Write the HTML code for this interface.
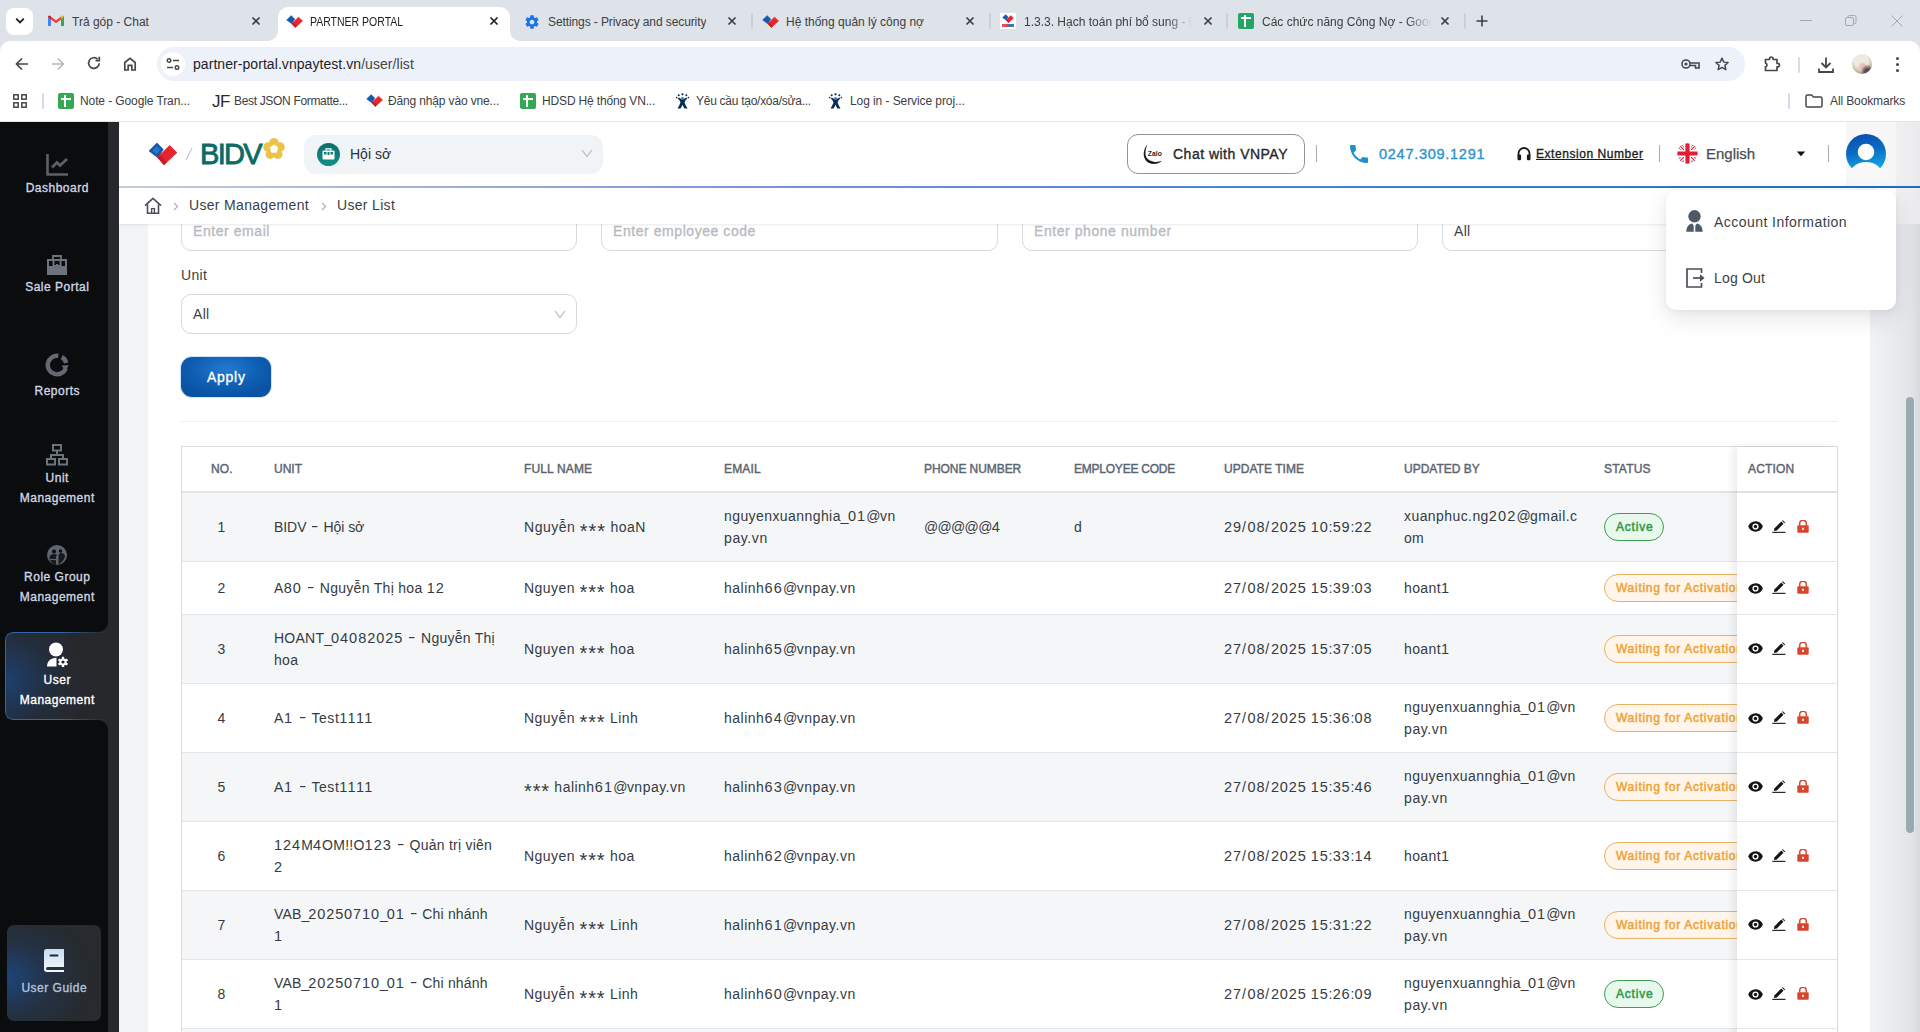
<!DOCTYPE html>
<html lang="en">
<head>
<meta charset="utf-8">
<title>PARTNER PORTAL</title>
<style>
*{box-sizing:border-box;margin:0;padding:0}
html,body{width:1920px;height:1032px;overflow:hidden;background:#fff;font-family:"Liberation Sans",sans-serif;}
body{position:relative}
.abs{position:absolute}
.sb{font-weight:normal!important;-webkit-text-stroke:.35px}
.th.sb{-webkit-text-stroke:.42px}
.bdg.sb{-webkit-text-stroke:.5px}
.t{position:absolute;white-space:nowrap;line-height:1}
/* ---------- browser chrome ---------- */
#tabstrip{position:absolute;left:0;top:0;width:1920px;height:54px;background:#dee2e9}
#toolbar{position:absolute;left:0;top:41px;width:1920px;height:41px;background:#fff;border-radius:10px 10px 0 0}
#bookmarks{position:absolute;left:0;top:82px;width:1920px;height:40px;background:#fff;border-bottom:1px solid #e2e4e7}
.tabtxt{position:absolute;top:15px;font-size:12px;color:#3c4043;white-space:nowrap;line-height:14px;overflow:hidden}
.bm{position:absolute;top:94px;font-size:12px;color:#3c4043;white-space:nowrap;line-height:14px}
/* ---------- page ---------- */
#page{position:absolute;left:0;top:122px;width:1920px;height:910px;background:#f2f3f7;overflow:hidden}
#side{position:absolute;left:0;top:0;width:119px;height:910px;background:#27282c}
.sblk{position:absolute;left:0;width:108px;background:#0b0c0e}
.nav{position:absolute;left:0;width:114.5px;letter-spacing:.5px;text-align:center;color:#cfd6e3;font-weight:bold;font-size:12px;line-height:20px}
#card{position:absolute;left:148px;top:0;width:1722px;height:910px;background:#fff}
#hdr{position:absolute;left:119px;top:0;width:1801px;height:66px;background:#fff}
#hdr:after{content:"";position:absolute;left:0;right:0;bottom:0;height:2px;background:linear-gradient(90deg,#c3ccd9 0,#9fb0d0 18%,#7d93d8 35%,#4d84d4 60%,#1f6dc2 100%)}
#crumb{position:absolute;left:119px;top:66px;width:1801px;height:36px;background:#fff;box-shadow:0 1px 2px rgba(0,0,0,.09)}

.lbl{position:absolute;white-space:nowrap;font-size:14px;line-height:22px;color:#3a3f47;letter-spacing:.32px}
.inp{position:absolute;height:40px;border:1px solid #d6d8db;border-radius:10px;background:#fff}
.ph{position:absolute;white-space:nowrap;letter-spacing:.56px;font-size:14px;line-height:22px;color:#b7bbc1;font-weight:bold}
#tbl{position:absolute;left:181px;top:324px;width:1657px;height:600px;border:1px solid #d9dcdf;border-bottom:none}
.th{position:absolute;top:11px;white-space:nowrap;font-size:12px;line-height:22px;color:#5b6570;font-weight:bold}
.row{position:absolute;left:0;width:1655px;border-bottom:1px solid #e4e7ea}
.row.s{background:#f5f6f8}
.c{position:absolute;top:0;bottom:0;display:flex;align-items:center;font-size:14px;line-height:22px;color:#363b42;white-space:nowrap}
.c i{font-style:normal}
.c i.h{display:inline-block;width:9.5px;text-align:center;transform:scaleX(1.6);position:relative;top:-1.4px;letter-spacing:0}
.c i.d{font-size:14.5px}
.c i.s{font-size:20px;line-height:0;position:relative;top:5.5px}
.bdg{position:absolute;left:1422px;height:28px;top:50%;margin-top:-14px;border-radius:14px;font-size:12px;font-weight:bold;line-height:26px;padding:0 11px;white-space:nowrap}
.bdg.a{letter-spacing:.8px;border:1px solid #3f9c52;background:#e9f8ed;color:#2f9a45;width:60px}
.bdg.w{letter-spacing:.73px;border:1px solid #e9b264;background:#fff5ea;color:#eba53c;width:160px}
#act{position:absolute;left:1555px;top:0;width:100px;height:600px;background:#fff;box-shadow:-4px 0 8px rgba(0,0,0,.08)}
.ic{position:absolute}
</style>
</head>
<body>
<!-- BROWSER CHROME -->

<div id="tabstrip">
  <!-- tab search button -->
  <div class="abs" style="left:6px;top:8px;width:27px;height:27px;background:#fff;border-radius:8px"></div>
  <svg class="abs" style="left:14px;top:16px" width="12" height="10" viewBox="0 0 12 10"><path d="M2.2 2.6 L6 6.4 L9.8 2.6" fill="none" stroke="#1f1f1f" stroke-width="1.8"/></svg>
  <!-- tab 1 gmail -->
  <svg class="abs" style="left:48px;top:15px" width="16" height="12" viewBox="0 0 16 12"><path d="M0 1.5V11h3V4.5L8 8.2l5-3.7V11h3V1.5L14.6.4 8 5.2 1.4.4z" fill="#ea4335"/><path d="M0 1.5V11h3V4.5z" fill="#4285f4"/><path d="M16 1.5V11h-3V4.5z" fill="#34a853"/><path d="M13 4.5V1.6L14.6.4 16 1.5z" fill="#fbbc04"/><path d="M3 4.5V1.6L1.4.4 0 1.5z" fill="#c5221f"/></svg>
  <div class="tabtxt" style="left:72px">Trả góp - Chat</div>
  <svg class="abs tx" style="left:251px;top:16px" width="10" height="10" viewBox="0 0 10 10"><path d="M1.500 1.500l7 7M8.500 1.500l-7 7" stroke="#3c4043" stroke-width="1.700"/></svg>
  <!-- active tab -->
  <div class="abs" style="left:278px;top:7px;width:232px;height:34px;background:#fff;border-radius:10px 10px 0 0"></div>
  <svg class="abs" style="left:268px;top:31px" width="10" height="10" viewBox="0 0 10 10"><path d="M10 0V10H0A10 10 0 0 0 10 0z" fill="#fff"/></svg>
  <svg class="abs" style="left:510px;top:31px" width="10" height="10" viewBox="0 0 10 10"><path d="M0 0V10H10A10 10 0 0 1 0 0z" fill="#fff"/></svg>
  <svg class="abs" style="left:286px;top:15px" width="17" height="13" viewBox="0 0 17 13"><g transform="scale(.58 .56)"><path d="M1 8.900L9 1 15.200 7.600 10 15.800z" fill="#1559ad" stroke="#1559ad" stroke-width=".8" stroke-linejoin="round"/><path d="M10 15.600L21.600 3.900 28.500 10.600 16 22.400z" fill="#e6262e" stroke="#e6262e" stroke-width="1.200" stroke-linejoin="round"/><path d="M10 15.600L12.200 13.400 18.300 20.200 16 22.400z" fill="#c81a23"/></g></svg>
  <div class="tabtxt" style="left:310px;color:#1f1f1f;transform:scaleX(.875);transform-origin:0 0;overflow:visible">PARTNER PORTAL</div>
  <svg class="abs" style="left:489px;top:16px" width="10" height="10" viewBox="0 0 10 10"><path d="M1.500 1.500l7 7M8.500 1.500l-7 7" stroke="#1f1f1f" stroke-width="1.700"/></svg>
  <!-- tab 3 settings -->
  <svg class="abs" style="left:524px;top:14px" width="16" height="16" viewBox="0 0 24 24"><path fill="#1a73e8" d="M19.43 12.98c.04-.32.07-.64.07-.98s-.03-.66-.07-.98l2.11-1.65c.19-.15.24-.42.12-.64l-2-3.46c-.12-.22-.39-.3-.61-.22l-2.49 1c-.52-.4-1.08-.73-1.69-.98l-.38-2.65C14.46 2.18 14.25 2 14 2h-4c-.25 0-.46.18-.49.42l-.38 2.65c-.61.25-1.17.59-1.69.98l-2.49-1c-.23-.09-.49 0-.61.22l-2 3.46c-.13.22-.07.49.12.64l2.11 1.65c-.04.32-.07.65-.07.98s.03.66.07.98l-2.11 1.65c-.19.15-.24.42-.12.64l2 3.46c.12.22.39.3.61.22l2.49-1c.52.4 1.08.73 1.69.98l.38 2.65c.03.24.24.42.49.42h4c.25 0 .46-.18.49-.42l.38-2.65c.61-.25 1.17-.59 1.69-.98l2.49 1c.23.09.49 0 .61-.22l2-3.46c.12-.22.07-.49-.12-.64l-2.11-1.65zM12 15.5c-1.93 0-3.500-1.57-3.500-3.500s1.570-3.500 3.500-3.500 3.500 1.570 3.500 3.500-1.570 3.500-3.500 3.500z"/></svg>
  <div class="tabtxt" style="left:548px;letter-spacing:-.1px">Settings - Privacy and security</div>
  <svg class="abs" style="left:727px;top:16px" width="10" height="10" viewBox="0 0 10 10"><path d="M1.500 1.500l7 7M8.500 1.500l-7 7" stroke="#3c4043" stroke-width="1.700"/></svg>
  <div class="abs" style="left:751px;top:13px;width:2px;height:16px;background:#cbcfd8;border-radius:1px"></div>
  <!-- tab 4 -->
  <svg class="abs" style="left:762px;top:15px" width="17" height="13" viewBox="0 0 17 13"><g transform="scale(.58 .56)"><path d="M1 8.900L9 1 15.200 7.600 10 15.800z" fill="#1559ad" stroke="#1559ad" stroke-width=".8" stroke-linejoin="round"/><path d="M10 15.600L21.600 3.900 28.500 10.600 16 22.400z" fill="#e6262e" stroke="#e6262e" stroke-width="1.200" stroke-linejoin="round"/><path d="M10 15.600L12.200 13.400 18.300 20.200 16 22.400z" fill="#c81a23"/></g></svg>
  <div class="tabtxt" style="left:786px">Hệ thống quản lý công nợ</div>
  <svg class="abs" style="left:965px;top:16px" width="10" height="10" viewBox="0 0 10 10"><path d="M1.500 1.500l7 7M8.500 1.500l-7 7" stroke="#3c4043" stroke-width="1.700"/></svg>
  <div class="abs" style="left:989px;top:13px;width:2px;height:16px;background:#cbcfd8;border-radius:1px"></div>
  <!-- tab 5 -->
  <div class="abs" style="left:1000px;top:13px;width:16px;height:16px;background:#fff"></div>
  <svg class="abs" style="left:1002px;top:14px" width="12" height="9" viewBox="0 0 17 13"><g transform="scale(.58 .56)"><path d="M1 8.900L9 1 15.200 7.600 10 15.800z" fill="#1559ad" stroke="#1559ad" stroke-width=".8" stroke-linejoin="round"/><path d="M10 15.600L21.600 3.900 28.500 10.600 16 22.400z" fill="#e6262e" stroke="#e6262e" stroke-width="1.200" stroke-linejoin="round"/><path d="M10 15.600L12.200 13.400 18.300 20.200 16 22.400z" fill="#c81a23"/></g></svg>
  <div class="abs" style="left:1002px;top:24px;width:12px;height:3px;background:linear-gradient(90deg,#e3212b 0 45%,#15519e 45% 100%);opacity:.8"></div>
  <div class="tabtxt" style="left:1024px;width:168px;-webkit-mask-image:linear-gradient(90deg,#000 85%,transparent);mask-image:linear-gradient(90deg,#000 85%,transparent)">1.3.3. Hạch toán phí bổ sung - Đ</div>
  <svg class="abs" style="left:1203px;top:16px" width="10" height="10" viewBox="0 0 10 10"><path d="M1.500 1.500l7 7M8.500 1.500l-7 7" stroke="#3c4043" stroke-width="1.700"/></svg>
  <div class="abs" style="left:1226px;top:13px;width:2px;height:16px;background:#cbcfd8;border-radius:1px"></div>
  <!-- tab 6 sheets -->
  <div class="abs" style="left:1238px;top:13px;width:16px;height:16px;background:#23a566;border-radius:2px"></div>
  <div class="abs" style="left:1241px;top:17px;width:10px;height:2px;background:#fff"></div>
  <div class="abs" style="left:1244px;top:15px;width:2px;height:12px;background:#fff"></div>
  <div class="tabtxt" style="left:1262px;width:170px;-webkit-mask-image:linear-gradient(90deg,#000 85%,transparent);mask-image:linear-gradient(90deg,#000 85%,transparent)">Các chức năng Công Nợ - Google</div>
  <svg class="abs" style="left:1440px;top:16px" width="10" height="10" viewBox="0 0 10 10"><path d="M1.500 1.500l7 7M8.500 1.500l-7 7" stroke="#3c4043" stroke-width="1.700"/></svg>
  <div class="abs" style="left:1464px;top:13px;width:2px;height:16px;background:#cbcfd8;border-radius:1px"></div>
  <svg class="abs" style="left:1476px;top:15px" width="12" height="12" viewBox="0 0 12 12"><path d="M6 0.500V11.500M0.500 6H11.500" stroke="#3c4043" stroke-width="1.6"/></svg>
  <!-- window controls -->
  <div class="abs" style="left:1800px;top:20px;width:12px;height:1px;background:#a4a8b0"></div>
  <svg class="abs" style="left:1845px;top:15px" width="12" height="12" viewBox="0 0 12 12"><rect x="0.500" y="2.500" width="8" height="8" rx="1.500" fill="none" stroke="#a4a8b0"/><path d="M3 2.500V1.800Q3 0.500 4.300 0.500H9.500Q11 0.500 11 2V7.200Q11 8.500 9.700 8.500H9" fill="none" stroke="#a4a8b0"/></svg>
  <svg class="abs" style="left:1891px;top:15px" width="12" height="12" viewBox="0 0 12 12"><path d="M0.500 0.500l11 11M11.500 0.500l-11 11" stroke="#a4a8b0" stroke-width="1"/></svg>
</div>
<div id="toolbar">
  <!-- back -->
  <svg class="abs" style="left:14px;top:15px" width="16" height="16" viewBox="0 0 16 16"><path d="M14 8H3M8 2.500L2.500 8L8 13.500" fill="none" stroke="#474747" stroke-width="1.700"/></svg>
  <svg class="abs" style="left:50px;top:15px" width="16" height="16" viewBox="0 0 16 16"><path d="M2 8H13M8 2.500L13.500 8L8 13.500" fill="none" stroke="#b5b8bd" stroke-width="1.500"/></svg>
  <svg class="abs" style="left:86px;top:14px" width="16" height="16" viewBox="0 0 16 16"><path d="M13.200 8.200A5.300 5.300 0 1 1 11.600 4.200" fill="none" stroke="#474747" stroke-width="1.700"/><path d="M13.300 1.800V5.600H9.500" fill="none" stroke="#474747" stroke-width="1.700"/></svg>
  <svg class="abs" style="left:122px;top:15px" width="16" height="16" viewBox="0 0 16 16"><path d="M2.800 14V6.500L8 2.300L13.200 6.500V14H9.800V9.300H6.200V14Z" fill="none" stroke="#474747" stroke-width="1.700" stroke-linejoin="miter"/></svg>
  <!-- url pill -->
  <div class="abs" style="left:157px;top:6px;width:1588px;height:34px;background:#edf1fa;border-radius:17px"></div>
  <div class="abs" style="left:161px;top:11px;width:24px;height:24px;background:#fff;border-radius:12px"></div>
  <svg class="abs" style="left:166px;top:16px" width="14" height="14" viewBox="0 0 14 14"><circle cx="3" cy="3.500" r="1.800" fill="none" stroke="#474747" stroke-width="1.400"/><path d="M7 3.500H13" stroke="#474747" stroke-width="1.500"/><circle cx="11" cy="10.500" r="1.800" fill="none" stroke="#474747" stroke-width="1.400"/><path d="M1 10.500H7" stroke="#474747" stroke-width="1.500"/></svg>
  <div class="t" id="url" style="left:193px;top:16px;letter-spacing:.06px;font-size:14px;color:#1f1f1f">partner-portal.vnpaytest.vn<span style="color:#474747">/user/list</span></div>
  <!-- key -->
  <svg class="abs" style="left:1681px;top:18px" width="19" height="11" viewBox="0 0 19 11"><circle cx="5" cy="5" r="4" fill="none" stroke="#474747" stroke-width="1.600"/><circle cx="5" cy="5" r="1.600" fill="#474747"/><path d="M9 4H18V9H14.500V6.500H9" fill="none" stroke="#474747" stroke-width="1.600"/></svg>
  <!-- star -->
  <svg class="abs" style="left:1714px;top:15px" width="16" height="16" viewBox="0 0 24 24"><path d="M12 3.200l2.700 6 6.500.600-4.900 4.300 1.500 6.400L12 17.100 6.200 20.500l1.500-6.400-4.900-4.300 6.500-.600z" fill="none" stroke="#474747" stroke-width="2.200" stroke-linejoin="round"/></svg>
  <!-- extension -->
  <svg class="abs" style="left:1763px;top:14px" width="18" height="18" viewBox="0 0 18 18"><path d="M2.500 4.500H6.500V3.800a1.800 1.800 0 0 1 3.600 0V4.500H14V8.300h.7a1.800 1.800 0 0 1 0 3.600H14V15.500H2.500V11.800a1.900 1.900 0 0 0 0-3.700Z" fill="none" stroke="#474747" stroke-width="1.700" stroke-linejoin="round"/></svg>
  <div class="abs" style="left:1798px;top:16px;width:2px;height:16px;background:#d5dbe8;border-radius:1px"></div>
  <!-- download -->
  <svg class="abs" style="left:1817px;top:15px" width="18" height="18" viewBox="0 0 18 18"><path d="M9 1.500V11M4.500 7L9 11.500L13.500 7" fill="none" stroke="#474747" stroke-width="1.800"/><path d="M2 12.500V16H16V12.500" fill="none" stroke="#474747" stroke-width="1.800"/></svg>
  <!-- avatar -->
  <div class="abs" style="left:1852px;top:13px;width:20px;height:20px;border-radius:10px;background:radial-gradient(circle at 78% 88%,#5a4c55 0 12%,transparent 30%),radial-gradient(circle at 55% 65%,#e6c3b3 0 16%,transparent 32%),radial-gradient(circle at 45% 32%,#f0ebe2 0 38%,#d6c9b6 58%,#a39080 82%,#7d7068 100%)"></div>
  <!-- menu dots -->
  <div class="abs" style="left:1896px;top:16px;width:3px;height:3px;border-radius:2px;background:#474747;box-shadow:0 6px 0 #474747,0 12px 0 #474747"></div>
</div>
<div id="bookmarks">
  <svg class="abs" style="left:13px;top:12px" width="14" height="14" viewBox="0 0 14 14"><g fill="none" stroke="#474747" stroke-width="1.500"><rect x="0.800" y="0.800" width="4.400" height="4.400"/><rect x="8.800" y="0.800" width="4.400" height="4.400"/><rect x="0.800" y="8.800" width="4.400" height="4.400"/><rect x="8.800" y="8.800" width="4.400" height="4.400"/></g></svg>
  <div class="abs" style="left:42px;top:11px;width:2px;height:16px;background:#d5dbe8;border-radius:1px"></div>
  <!-- sheets icon -->
  <div class="abs" style="left:58px;top:11px;width:16px;height:16px;background:#34a853;border-radius:2px"></div>
  <div class="abs" style="left:61px;top:16px;width:10px;height:2px;background:#fff"></div>
  <div class="abs" style="left:64px;top:13px;width:2px;height:12px;background:#fff"></div>
</div>
<div class="bm" style="left:80px;letter-spacing:-.1px">Note - Google Tran...</div>
<div class="t" style="left:212px;top:93px;font-size:17px;color:#2a2a2a;letter-spacing:-.5px">JF</div>
<div class="bm" style="left:234px;letter-spacing:-.33px">Best JSON Formatte...</div>
<svg class="abs" style="left:366px;top:94px" width="17" height="13" viewBox="0 0 17 13"><g transform="scale(.58 .56)"><path d="M1 8.900L9 1 15.200 7.600 10 15.800z" fill="#1559ad" stroke="#1559ad" stroke-width=".8" stroke-linejoin="round"/><path d="M10 15.600L21.600 3.900 28.500 10.600 16 22.400z" fill="#e6262e" stroke="#e6262e" stroke-width="1.200" stroke-linejoin="round"/><path d="M10 15.600L12.200 13.400 18.300 20.200 16 22.400z" fill="#c81a23"/></g></svg>
<div class="bm" style="left:388px;letter-spacing:-.15px">Đăng nhập vào vne...</div>
<div class="abs" style="left:520px;top:93px;width:16px;height:16px;background:#34a853;border-radius:2px"></div>
<div class="abs" style="left:523px;top:98px;width:10px;height:2px;background:#fff"></div>
<div class="abs" style="left:526px;top:95px;width:2px;height:12px;background:#fff"></div>
<div class="bm" style="left:542px;letter-spacing:-.15px">HDSD Hệ thống VN...</div>
<svg class="abs jira" style="left:675px;top:93px" width="15" height="16" viewBox="0 0 15 16"><g fill="#0b2a55"><circle cx="7.500" cy="1.300" r="1.100"/><circle cx="3.700" cy="2.300" r="1"/><circle cx="11.300" cy="2.300" r="1"/><circle cx="1.600" cy="4.600" r=".8"/><circle cx="13.400" cy="4.600" r=".8"/><path d="M2.500 5.500C4 6.500 5 8 5.500 9.500 4.800 11.500 3.800 13.500 2.500 15.500H5.600C6.400 14.200 7 13 7.500 11.800 8 13 8.600 14.200 9.400 15.500H12.500C11.200 13.500 10.200 11.500 9.500 9.500 10 8 11 6.500 12.500 5.500L11 4.500C9.800 5.600 8.600 6.300 7.500 6.300 6.400 6.300 5.200 5.600 4 4.500Z"/></g><circle cx="7.500" cy="5.600" r="1.500" fill="#2a7de1"/></svg>
<div class="bm" style="left:696px;letter-spacing:-.27px">Yêu cầu tạo/xóa/sửa...</div>
<svg class="abs jira" style="left:828px;top:93px" width="15" height="16" viewBox="0 0 15 16"><g fill="#0b2a55"><circle cx="7.500" cy="1.300" r="1.100"/><circle cx="3.700" cy="2.300" r="1"/><circle cx="11.300" cy="2.300" r="1"/><circle cx="1.600" cy="4.600" r=".8"/><circle cx="13.400" cy="4.600" r=".8"/><path d="M2.500 5.500C4 6.500 5 8 5.500 9.500 4.800 11.500 3.800 13.500 2.500 15.500H5.600C6.400 14.200 7 13 7.500 11.800 8 13 8.600 14.200 9.400 15.500H12.500C11.200 13.500 10.200 11.500 9.500 9.500 10 8 11 6.500 12.500 5.500L11 4.500C9.800 5.600 8.600 6.300 7.500 6.300 6.400 6.300 5.200 5.600 4 4.500Z"/></g><circle cx="7.500" cy="5.600" r="1.500" fill="#2a7de1"/></svg>
<div class="bm" style="left:850px;letter-spacing:-.08px">Log in - Service proj...</div>
<div class="abs" style="left:1788px;top:93px;width:2px;height:16px;background:#d5dbe8;border-radius:1px"></div>
<svg class="abs" style="left:1805px;top:94px" width="18" height="14" viewBox="0 0 18 14"><path d="M1 2.500Q1 1 2.500 1H6.500L8.500 3H15.500Q17 3 17 4.500V11.500Q17 13 15.500 13H2.500Q1 13 1 11.500Z" fill="none" stroke="#474747" stroke-width="1.500"/></svg>
<div class="bm" style="left:1830px;letter-spacing:-.12px">All Bookmarks</div>

<!-- PAGE -->
<div id="page">
  <div id="card"></div>
  <!-- filter row (partially hidden under breadcrumb) -->
  <div class="inp" style="left:181px;top:89px;width:396px"></div><div class="ph sb" id="ph1" style="left:193px;top:98px">Enter email</div>
  <div class="inp" style="left:601px;top:89px;width:397px"></div><div class="ph sb" id="ph2" style="left:613px;top:98px">Enter employee code</div>
  <div class="inp" style="left:1022px;top:89px;width:396px"></div><div class="ph sb" id="ph3" style="left:1034px;top:98px">Enter phone number</div>
  <div class="inp" style="left:1442px;top:89px;width:396px"></div><div class="lbl" style="left:1454px;top:98px">All</div>
  <div class="lbl" id="unit" style="left:181px;top:142px">Unit</div>
  <div class="inp" style="left:181px;top:172px;width:396px"></div><div class="lbl" style="left:193px;top:181px">All</div>
  <svg class="abs" style="left:554px;top:188px" width="12" height="9" viewBox="0 0 12 9"><path d="M1 1L6 7.500L11 1" fill="none" stroke="#b3b8be" stroke-width="1.200"/></svg>
  <div class="abs sb" id="apply" style="left:181px;top:235px;width:90px;height:40px;border-radius:11px;background:radial-gradient(ellipse 60% 70% at 50% 30%,#2479d2 0,#0f5fb4 60%,#0a52a2 100%);box-shadow:0 0 0 1px #cfe3f5;color:#fff;font-size:14px;letter-spacing:.7px;text-indent:.7px;font-weight:bold;line-height:40px;text-align:center">Apply</div>
  <div class="abs" style="left:181px;top:299px;width:1657px;height:1px;background:#eceef0"></div>
<div id="tbl">
<div class="th sb" id="th0" style="left:29px;letter-spacing:0.08px">NO.</div>
<div class="th sb" id="th1" style="left:92px;letter-spacing:0px">UNIT</div>
<div class="th sb" id="th2" style="left:342px;letter-spacing:0.14px">FULL NAME</div>
<div class="th sb" id="th3" style="left:542px;letter-spacing:0.17px">EMAIL</div>
<div class="th sb" id="th4" style="left:742px;letter-spacing:-0.07px">PHONE NUMBER</div>
<div class="th sb" id="th5" style="left:892px;letter-spacing:-0.23px">EMPLOYEE CODE</div>
<div class="th sb" id="th6" style="left:1042px;letter-spacing:0.04px">UPDATE TIME</div>
<div class="th sb" id="th7" style="left:1222px;letter-spacing:0px">UPDATED BY</div>
<div class="th sb" id="th8" style="left:1422px;letter-spacing:0.19px">STATUS</div>
<div class="abs" style="left:0;top:44px;width:1655px;height:2px;background:#dfe3e6"></div>
<div class="row s" style="top:46px;height:69px">
<div class="c" style="left:0;width:79px;justify-content:center">1</div>
<div class="c" style="left:92px"><div><span class="ln" style="letter-spacing:-0.07px">BIDV <i class="h">-</i> Hội sở</span></div></div>
<div class="c" style="left:342px"><div><span class="ln" style="letter-spacing:0.53px">Nguyễn <i class="s" style="letter-spacing:0.93px">***</i> hoaN</span></div></div>
<div class="c" style="left:542px"><div><span class="ln" style="letter-spacing:0.42px">nguyenxuannghia<i style="letter-spacing:-0.77px">_</i><i class="d" style="letter-spacing:1.16px">01</i><i style="letter-spacing:-0.57px">@</i>vn</span><br><span class="ln" style="letter-spacing:0.61px">pay.vn</span></div></div>
<div class="c" style="left:742px"><div><span class="ln" style="letter-spacing:0.32px"><i style="letter-spacing:-0.68px">@@@@@</i><i class="d" style="letter-spacing:1.05px">4</i></span></div></div>
<div class="c" style="left:892px"><div><span class="ln">d</span></div></div>
<div class="c" style="left:1042px"><div><span class="ln" style="letter-spacing:0.15px"><i class="d" style="letter-spacing:0.88px">29</i><i style="letter-spacing:1.65px">/</i><i class="d" style="letter-spacing:0.88px">08</i><i style="letter-spacing:1.65px">/</i><i class="d" style="letter-spacing:0.88px">2025</i> <i class="d" style="letter-spacing:0.88px">10</i>:<i class="d" style="letter-spacing:0.88px">59</i>:<i class="d" style="letter-spacing:0.88px">22</i></span></div></div>
<div class="c" style="left:1222px"><div><span class="ln" style="letter-spacing:0.42px">xuanphuc.ng<i class="d" style="letter-spacing:1.15px">202</i><i style="letter-spacing:-0.58px">@</i>gmail.c</span><br><span class="ln" style="letter-spacing:0.30px">om</span></div></div>
<div class="bdg a sb">Active</div>
</div>
<div class="row" style="top:115px;height:53px">
<div class="c" style="left:0;width:79px;justify-content:center">2</div>
<div class="c" style="left:92px"><div><span class="ln" style="letter-spacing:0.30px">A<i class="d" style="letter-spacing:1.03px">80</i> <i class="h">-</i> Nguyễn Thị hoa <i class="d" style="letter-spacing:1.03px">12</i></span></div></div>
<div class="c" style="left:342px"><div><span class="ln" style="letter-spacing:0.48px">Nguyen <i class="s" style="letter-spacing:0.88px">***</i> hoa</span></div></div>
<div class="c" style="left:542px"><div><span class="ln" style="letter-spacing:0.50px">halinh<i class="d" style="letter-spacing:1.23px">66</i><i style="letter-spacing:-0.50px">@</i>vnpay.vn</span></div></div>
<div class="c" style="left:1042px"><div><span class="ln" style="letter-spacing:0.15px"><i class="d" style="letter-spacing:0.88px">27</i><i style="letter-spacing:1.65px">/</i><i class="d" style="letter-spacing:0.88px">08</i><i style="letter-spacing:1.65px">/</i><i class="d" style="letter-spacing:0.88px">2025</i> <i class="d" style="letter-spacing:0.88px">15</i>:<i class="d" style="letter-spacing:0.88px">39</i>:<i class="d" style="letter-spacing:0.88px">03</i></span></div></div>
<div class="c" style="left:1222px"><div><span class="ln" style="letter-spacing:0.38px">hoant<i class="d" style="letter-spacing:1.11px">1</i></span></div></div>
<div class="bdg w sb">Waiting for Activation</div>
</div>
<div class="row s" style="top:168px;height:69px">
<div class="c" style="left:0;width:79px;justify-content:center">3</div>
<div class="c" style="left:92px"><div><span class="ln" style="letter-spacing:0.24px">HOANT<i style="letter-spacing:-0.96px">_</i><i class="d" style="letter-spacing:0.97px">04082025</i> <i class="h">-</i> Nguyễn Thị</span><br><span class="ln" style="letter-spacing:0.32px">hoa</span></div></div>
<div class="c" style="left:342px"><div><span class="ln" style="letter-spacing:0.48px">Nguyen <i class="s" style="letter-spacing:0.88px">***</i> hoa</span></div></div>
<div class="c" style="left:542px"><div><span class="ln" style="letter-spacing:0.50px">halinh<i class="d" style="letter-spacing:1.23px">65</i><i style="letter-spacing:-0.50px">@</i>vnpay.vn</span></div></div>
<div class="c" style="left:1042px"><div><span class="ln" style="letter-spacing:0.15px"><i class="d" style="letter-spacing:0.88px">27</i><i style="letter-spacing:1.65px">/</i><i class="d" style="letter-spacing:0.88px">08</i><i style="letter-spacing:1.65px">/</i><i class="d" style="letter-spacing:0.88px">2025</i> <i class="d" style="letter-spacing:0.88px">15</i>:<i class="d" style="letter-spacing:0.88px">37</i>:<i class="d" style="letter-spacing:0.88px">05</i></span></div></div>
<div class="c" style="left:1222px"><div><span class="ln" style="letter-spacing:0.38px">hoant<i class="d" style="letter-spacing:1.11px">1</i></span></div></div>
<div class="bdg w sb">Waiting for Activation</div>
</div>
<div class="row" style="top:237px;height:69px">
<div class="c" style="left:0;width:79px;justify-content:center">4</div>
<div class="c" style="left:92px"><div><span class="ln" style="letter-spacing:0.56px">A<i class="d" style="letter-spacing:1.29px">1</i> <i class="h">-</i> Test<i class="d" style="letter-spacing:1.29px">1111</i></span></div></div>
<div class="c" style="left:342px"><div><span class="ln" style="letter-spacing:0.48px">Nguyễn <i class="s" style="letter-spacing:0.88px">***</i> Linh</span></div></div>
<div class="c" style="left:542px"><div><span class="ln" style="letter-spacing:0.50px">halinh<i class="d" style="letter-spacing:1.23px">64</i><i style="letter-spacing:-0.50px">@</i>vnpay.vn</span></div></div>
<div class="c" style="left:1042px"><div><span class="ln" style="letter-spacing:0.15px"><i class="d" style="letter-spacing:0.88px">27</i><i style="letter-spacing:1.65px">/</i><i class="d" style="letter-spacing:0.88px">08</i><i style="letter-spacing:1.65px">/</i><i class="d" style="letter-spacing:0.88px">2025</i> <i class="d" style="letter-spacing:0.88px">15</i>:<i class="d" style="letter-spacing:0.88px">36</i>:<i class="d" style="letter-spacing:0.88px">08</i></span></div></div>
<div class="c" style="left:1222px"><div><span class="ln" style="letter-spacing:0.42px">nguyenxuannghia<i style="letter-spacing:-0.77px">_</i><i class="d" style="letter-spacing:1.16px">01</i><i style="letter-spacing:-0.57px">@</i>vn</span><br><span class="ln" style="letter-spacing:0.61px">pay.vn</span></div></div>
<div class="bdg w sb">Waiting for Activation</div>
</div>
<div class="row s" style="top:306px;height:69px">
<div class="c" style="left:0;width:79px;justify-content:center">5</div>
<div class="c" style="left:92px"><div><span class="ln" style="letter-spacing:0.56px">A<i class="d" style="letter-spacing:1.29px">1</i> <i class="h">-</i> Test<i class="d" style="letter-spacing:1.29px">1111</i></span></div></div>
<div class="c" style="left:342px"><div><span class="ln" style="letter-spacing:0.48px"><i class="s" style="letter-spacing:0.88px">***</i> halinh<i class="d" style="letter-spacing:1.21px">61</i><i style="letter-spacing:-0.52px">@</i>vnpay.vn</span></div></div>
<div class="c" style="left:542px"><div><span class="ln" style="letter-spacing:0.50px">halinh<i class="d" style="letter-spacing:1.23px">63</i><i style="letter-spacing:-0.50px">@</i>vnpay.vn</span></div></div>
<div class="c" style="left:1042px"><div><span class="ln" style="letter-spacing:0.15px"><i class="d" style="letter-spacing:0.88px">27</i><i style="letter-spacing:1.65px">/</i><i class="d" style="letter-spacing:0.88px">08</i><i style="letter-spacing:1.65px">/</i><i class="d" style="letter-spacing:0.88px">2025</i> <i class="d" style="letter-spacing:0.88px">15</i>:<i class="d" style="letter-spacing:0.88px">35</i>:<i class="d" style="letter-spacing:0.88px">46</i></span></div></div>
<div class="c" style="left:1222px"><div><span class="ln" style="letter-spacing:0.42px">nguyenxuannghia<i style="letter-spacing:-0.77px">_</i><i class="d" style="letter-spacing:1.16px">01</i><i style="letter-spacing:-0.57px">@</i>vn</span><br><span class="ln" style="letter-spacing:0.61px">pay.vn</span></div></div>
<div class="bdg w sb">Waiting for Activation</div>
</div>
<div class="row" style="top:375px;height:69px">
<div class="c" style="left:0;width:79px;justify-content:center">6</div>
<div class="c" style="left:92px"><div><span class="ln" style="letter-spacing:0.25px"><i class="d" style="letter-spacing:0.98px">124</i>M<i class="d" style="letter-spacing:0.98px">4</i>OM!!O<i class="d" style="letter-spacing:0.98px">123</i> <i class="h">-</i> Quản trị viên</span><br><span class="ln"><i class="d" style="letter-spacing:0.73px">2</i></span></div></div>
<div class="c" style="left:342px"><div><span class="ln" style="letter-spacing:0.48px">Nguyen <i class="s" style="letter-spacing:0.88px">***</i> hoa</span></div></div>
<div class="c" style="left:542px"><div><span class="ln" style="letter-spacing:0.50px">halinh<i class="d" style="letter-spacing:1.23px">62</i><i style="letter-spacing:-0.50px">@</i>vnpay.vn</span></div></div>
<div class="c" style="left:1042px"><div><span class="ln" style="letter-spacing:0.15px"><i class="d" style="letter-spacing:0.88px">27</i><i style="letter-spacing:1.65px">/</i><i class="d" style="letter-spacing:0.88px">08</i><i style="letter-spacing:1.65px">/</i><i class="d" style="letter-spacing:0.88px">2025</i> <i class="d" style="letter-spacing:0.88px">15</i>:<i class="d" style="letter-spacing:0.88px">33</i>:<i class="d" style="letter-spacing:0.88px">14</i></span></div></div>
<div class="c" style="left:1222px"><div><span class="ln" style="letter-spacing:0.38px">hoant<i class="d" style="letter-spacing:1.11px">1</i></span></div></div>
<div class="bdg w sb">Waiting for Activation</div>
</div>
<div class="row s" style="top:444px;height:69px">
<div class="c" style="left:0;width:79px;justify-content:center">7</div>
<div class="c" style="left:92px"><div><span class="ln" style="letter-spacing:0.17px">VAB<i style="letter-spacing:-1.03px">_</i><i class="d" style="letter-spacing:0.90px">20250710</i><i style="letter-spacing:-1.03px">_</i><i class="d" style="letter-spacing:0.90px">01</i> <i class="h">-</i> Chi nhánh</span><br><span class="ln"><i class="d" style="letter-spacing:0.73px">1</i></span></div></div>
<div class="c" style="left:342px"><div><span class="ln" style="letter-spacing:0.48px">Nguyễn <i class="s" style="letter-spacing:0.88px">***</i> Linh</span></div></div>
<div class="c" style="left:542px"><div><span class="ln" style="letter-spacing:0.50px">halinh<i class="d" style="letter-spacing:1.23px">61</i><i style="letter-spacing:-0.50px">@</i>vnpay.vn</span></div></div>
<div class="c" style="left:1042px"><div><span class="ln" style="letter-spacing:0.15px"><i class="d" style="letter-spacing:0.88px">27</i><i style="letter-spacing:1.65px">/</i><i class="d" style="letter-spacing:0.88px">08</i><i style="letter-spacing:1.65px">/</i><i class="d" style="letter-spacing:0.88px">2025</i> <i class="d" style="letter-spacing:0.88px">15</i>:<i class="d" style="letter-spacing:0.88px">31</i>:<i class="d" style="letter-spacing:0.88px">22</i></span></div></div>
<div class="c" style="left:1222px"><div><span class="ln" style="letter-spacing:0.42px">nguyenxuannghia<i style="letter-spacing:-0.77px">_</i><i class="d" style="letter-spacing:1.16px">01</i><i style="letter-spacing:-0.57px">@</i>vn</span><br><span class="ln" style="letter-spacing:0.61px">pay.vn</span></div></div>
<div class="bdg w sb">Waiting for Activation</div>
</div>
<div class="row" style="top:513px;height:69px">
<div class="c" style="left:0;width:79px;justify-content:center">8</div>
<div class="c" style="left:92px"><div><span class="ln" style="letter-spacing:0.17px">VAB<i style="letter-spacing:-1.03px">_</i><i class="d" style="letter-spacing:0.90px">20250710</i><i style="letter-spacing:-1.03px">_</i><i class="d" style="letter-spacing:0.90px">01</i> <i class="h">-</i> Chi nhánh</span><br><span class="ln"><i class="d" style="letter-spacing:0.73px">1</i></span></div></div>
<div class="c" style="left:342px"><div><span class="ln" style="letter-spacing:0.48px">Nguyễn <i class="s" style="letter-spacing:0.88px">***</i> Linh</span></div></div>
<div class="c" style="left:542px"><div><span class="ln" style="letter-spacing:0.50px">halinh<i class="d" style="letter-spacing:1.23px">60</i><i style="letter-spacing:-0.50px">@</i>vnpay.vn</span></div></div>
<div class="c" style="left:1042px"><div><span class="ln" style="letter-spacing:0.15px"><i class="d" style="letter-spacing:0.88px">27</i><i style="letter-spacing:1.65px">/</i><i class="d" style="letter-spacing:0.88px">08</i><i style="letter-spacing:1.65px">/</i><i class="d" style="letter-spacing:0.88px">2025</i> <i class="d" style="letter-spacing:0.88px">15</i>:<i class="d" style="letter-spacing:0.88px">26</i>:<i class="d" style="letter-spacing:0.88px">09</i></span></div></div>
<div class="c" style="left:1222px"><div><span class="ln" style="letter-spacing:0.42px">nguyenxuannghia<i style="letter-spacing:-0.77px">_</i><i class="d" style="letter-spacing:1.16px">01</i><i style="letter-spacing:-0.57px">@</i>vn</span><br><span class="ln" style="letter-spacing:0.61px">pay.vn</span></div></div>
<div class="bdg a sb">Active</div>
</div>
<div class="row s" style="top:582px;height:69px">
</div>
<div id="act">
<div class="th sb" id="th9" style="left:11px;letter-spacing:0.18px">ACTION</div>
<div class="abs" style="left:0;top:44px;width:100px;height:2px;background:#dfe3e6"></div>
<div class="abs" style="left:0;top:114px;width:100px;height:1px;background:#e4e7ea"></div>
<svg class="ic" style="left:11px;top:74px" width="15" height="11" viewBox="0 0 15 11"><path d="M7.500 0.300C4 0.300 1.300 2.500 0.200 5.500 1.300 8.500 4 10.700 7.500 10.700S13.700 8.500 14.800 5.500C13.700 2.500 11 0.300 7.500 0.300z" fill="#141414"/><circle cx="7.500" cy="5.500" r="3.100" fill="#fff"/><circle cx="7.500" cy="5.500" r="1.700" fill="#141414"/></svg>
<svg class="ic" style="left:35px;top:73px" width="14" height="13" viewBox="0 0 14 13"><path d="M2.600 8.200L9.300 1.500l2.200 2.200L4.800 10.400l-2.900.700z" fill="#141414"/><path d="M10 .8l.900-.600 2.200 2.200-.700.800z" fill="#141414"/><rect x="0.300" y="11.800" width="13.200" height="1.100" fill="#141414"/></svg>
<svg class="ic" style="left:60px;top:73px" width="12" height="13" viewBox="0 0 12 13"><path d="M2.700 5.500V3.600a3.300 3.300 0 0 1 6.600 0V5.500" fill="none" stroke="#d8452c" stroke-width="1.500"/><rect x="0.300" y="5.200" width="11.400" height="7.600" rx="1" fill="#d8452c"/><rect x="5" y="7.800" width="2" height="2.200" fill="#fff" opacity=".85"/></svg>
<div class="abs" style="left:0;top:167px;width:100px;height:1px;background:#e4e7ea"></div>
<svg class="ic" style="left:11px;top:136px" width="15" height="11" viewBox="0 0 15 11"><path d="M7.500 0.300C4 0.300 1.300 2.500 0.200 5.500 1.300 8.500 4 10.700 7.500 10.700S13.700 8.500 14.800 5.500C13.700 2.500 11 0.300 7.500 0.300z" fill="#141414"/><circle cx="7.500" cy="5.500" r="3.100" fill="#fff"/><circle cx="7.500" cy="5.500" r="1.700" fill="#141414"/></svg>
<svg class="ic" style="left:35px;top:134px" width="14" height="13" viewBox="0 0 14 13"><path d="M2.600 8.200L9.300 1.500l2.200 2.200L4.800 10.400l-2.900.700z" fill="#141414"/><path d="M10 .8l.900-.600 2.200 2.200-.700.800z" fill="#141414"/><rect x="0.300" y="11.800" width="13.200" height="1.100" fill="#141414"/></svg>
<svg class="ic" style="left:60px;top:134px" width="12" height="13" viewBox="0 0 12 13"><path d="M2.700 5.500V3.600a3.300 3.300 0 0 1 6.600 0V5.500" fill="none" stroke="#d8452c" stroke-width="1.500"/><rect x="0.300" y="5.200" width="11.400" height="7.600" rx="1" fill="#d8452c"/><rect x="5" y="7.800" width="2" height="2.200" fill="#fff" opacity=".85"/></svg>
<div class="abs" style="left:0;top:236px;width:100px;height:1px;background:#e4e7ea"></div>
<svg class="ic" style="left:11px;top:196px" width="15" height="11" viewBox="0 0 15 11"><path d="M7.500 0.300C4 0.300 1.300 2.500 0.200 5.500 1.300 8.500 4 10.700 7.500 10.700S13.700 8.500 14.800 5.500C13.700 2.500 11 0.300 7.500 0.300z" fill="#141414"/><circle cx="7.500" cy="5.500" r="3.100" fill="#fff"/><circle cx="7.500" cy="5.500" r="1.700" fill="#141414"/></svg>
<svg class="ic" style="left:35px;top:195px" width="14" height="13" viewBox="0 0 14 13"><path d="M2.600 8.200L9.300 1.500l2.200 2.200L4.800 10.400l-2.900.700z" fill="#141414"/><path d="M10 .8l.900-.600 2.200 2.200-.700.800z" fill="#141414"/><rect x="0.300" y="11.800" width="13.200" height="1.100" fill="#141414"/></svg>
<svg class="ic" style="left:60px;top:195px" width="12" height="13" viewBox="0 0 12 13"><path d="M2.700 5.500V3.600a3.300 3.300 0 0 1 6.600 0V5.500" fill="none" stroke="#d8452c" stroke-width="1.500"/><rect x="0.300" y="5.200" width="11.400" height="7.600" rx="1" fill="#d8452c"/><rect x="5" y="7.800" width="2" height="2.200" fill="#fff" opacity=".85"/></svg>
<div class="abs" style="left:0;top:305px;width:100px;height:1px;background:#e4e7ea"></div>
<svg class="ic" style="left:11px;top:266px" width="15" height="11" viewBox="0 0 15 11"><path d="M7.500 0.300C4 0.300 1.300 2.500 0.200 5.500 1.300 8.500 4 10.700 7.500 10.700S13.700 8.500 14.800 5.500C13.700 2.500 11 0.300 7.500 0.300z" fill="#141414"/><circle cx="7.500" cy="5.500" r="3.100" fill="#fff"/><circle cx="7.500" cy="5.500" r="1.700" fill="#141414"/></svg>
<svg class="ic" style="left:35px;top:264px" width="14" height="13" viewBox="0 0 14 13"><path d="M2.600 8.200L9.300 1.500l2.200 2.200L4.800 10.400l-2.900.700z" fill="#141414"/><path d="M10 .8l.900-.600 2.200 2.200-.700.800z" fill="#141414"/><rect x="0.300" y="11.800" width="13.200" height="1.100" fill="#141414"/></svg>
<svg class="ic" style="left:60px;top:264px" width="12" height="13" viewBox="0 0 12 13"><path d="M2.700 5.500V3.600a3.300 3.300 0 0 1 6.600 0V5.500" fill="none" stroke="#d8452c" stroke-width="1.500"/><rect x="0.300" y="5.200" width="11.400" height="7.600" rx="1" fill="#d8452c"/><rect x="5" y="7.800" width="2" height="2.200" fill="#fff" opacity=".85"/></svg>
<div class="abs" style="left:0;top:374px;width:100px;height:1px;background:#e4e7ea"></div>
<svg class="ic" style="left:11px;top:334px" width="15" height="11" viewBox="0 0 15 11"><path d="M7.500 0.300C4 0.300 1.300 2.500 0.200 5.500 1.300 8.500 4 10.700 7.500 10.700S13.700 8.500 14.800 5.500C13.700 2.500 11 0.300 7.500 0.300z" fill="#141414"/><circle cx="7.500" cy="5.500" r="3.100" fill="#fff"/><circle cx="7.500" cy="5.500" r="1.700" fill="#141414"/></svg>
<svg class="ic" style="left:35px;top:333px" width="14" height="13" viewBox="0 0 14 13"><path d="M2.600 8.200L9.300 1.500l2.200 2.200L4.800 10.400l-2.900.700z" fill="#141414"/><path d="M10 .8l.900-.600 2.200 2.200-.700.800z" fill="#141414"/><rect x="0.300" y="11.800" width="13.200" height="1.100" fill="#141414"/></svg>
<svg class="ic" style="left:60px;top:333px" width="12" height="13" viewBox="0 0 12 13"><path d="M2.700 5.500V3.600a3.300 3.300 0 0 1 6.600 0V5.500" fill="none" stroke="#d8452c" stroke-width="1.500"/><rect x="0.300" y="5.200" width="11.400" height="7.600" rx="1" fill="#d8452c"/><rect x="5" y="7.800" width="2" height="2.200" fill="#fff" opacity=".85"/></svg>
<div class="abs" style="left:0;top:443px;width:100px;height:1px;background:#e4e7ea"></div>
<svg class="ic" style="left:11px;top:404px" width="15" height="11" viewBox="0 0 15 11"><path d="M7.500 0.300C4 0.300 1.300 2.500 0.200 5.500 1.300 8.500 4 10.700 7.500 10.700S13.700 8.500 14.800 5.500C13.700 2.500 11 0.300 7.500 0.300z" fill="#141414"/><circle cx="7.500" cy="5.500" r="3.100" fill="#fff"/><circle cx="7.500" cy="5.500" r="1.700" fill="#141414"/></svg>
<svg class="ic" style="left:35px;top:402px" width="14" height="13" viewBox="0 0 14 13"><path d="M2.600 8.200L9.300 1.500l2.200 2.200L4.800 10.400l-2.900.700z" fill="#141414"/><path d="M10 .8l.900-.600 2.200 2.200-.700.800z" fill="#141414"/><rect x="0.300" y="11.800" width="13.200" height="1.100" fill="#141414"/></svg>
<svg class="ic" style="left:60px;top:402px" width="12" height="13" viewBox="0 0 12 13"><path d="M2.700 5.500V3.600a3.300 3.300 0 0 1 6.600 0V5.500" fill="none" stroke="#d8452c" stroke-width="1.500"/><rect x="0.300" y="5.200" width="11.400" height="7.600" rx="1" fill="#d8452c"/><rect x="5" y="7.800" width="2" height="2.200" fill="#fff" opacity=".85"/></svg>
<div class="abs" style="left:0;top:512px;width:100px;height:1px;background:#e4e7ea"></div>
<svg class="ic" style="left:11px;top:472px" width="15" height="11" viewBox="0 0 15 11"><path d="M7.500 0.300C4 0.300 1.300 2.500 0.200 5.500 1.300 8.500 4 10.700 7.500 10.700S13.700 8.500 14.800 5.500C13.700 2.500 11 0.300 7.500 0.300z" fill="#141414"/><circle cx="7.500" cy="5.500" r="3.100" fill="#fff"/><circle cx="7.500" cy="5.500" r="1.700" fill="#141414"/></svg>
<svg class="ic" style="left:35px;top:471px" width="14" height="13" viewBox="0 0 14 13"><path d="M2.600 8.200L9.300 1.500l2.200 2.200L4.800 10.400l-2.900.700z" fill="#141414"/><path d="M10 .8l.900-.600 2.200 2.200-.700.800z" fill="#141414"/><rect x="0.300" y="11.800" width="13.200" height="1.100" fill="#141414"/></svg>
<svg class="ic" style="left:60px;top:471px" width="12" height="13" viewBox="0 0 12 13"><path d="M2.700 5.500V3.600a3.300 3.300 0 0 1 6.600 0V5.500" fill="none" stroke="#d8452c" stroke-width="1.500"/><rect x="0.300" y="5.200" width="11.400" height="7.600" rx="1" fill="#d8452c"/><rect x="5" y="7.800" width="2" height="2.200" fill="#fff" opacity=".85"/></svg>
<div class="abs" style="left:0;top:581px;width:100px;height:1px;background:#e4e7ea"></div>
<svg class="ic" style="left:11px;top:542px" width="15" height="11" viewBox="0 0 15 11"><path d="M7.500 0.300C4 0.300 1.300 2.500 0.200 5.500 1.300 8.500 4 10.700 7.500 10.700S13.700 8.500 14.800 5.500C13.700 2.500 11 0.300 7.500 0.300z" fill="#141414"/><circle cx="7.500" cy="5.500" r="3.100" fill="#fff"/><circle cx="7.500" cy="5.500" r="1.700" fill="#141414"/></svg>
<svg class="ic" style="left:35px;top:540px" width="14" height="13" viewBox="0 0 14 13"><path d="M2.600 8.200L9.300 1.500l2.200 2.200L4.800 10.400l-2.900.700z" fill="#141414"/><path d="M10 .8l.900-.600 2.200 2.200-.700.800z" fill="#141414"/><rect x="0.300" y="11.800" width="13.200" height="1.100" fill="#141414"/></svg>
<svg class="ic" style="left:60px;top:540px" width="12" height="13" viewBox="0 0 12 13"><path d="M2.700 5.500V3.600a3.300 3.300 0 0 1 6.600 0V5.500" fill="none" stroke="#d8452c" stroke-width="1.500"/><rect x="0.300" y="5.200" width="11.400" height="7.600" rx="1" fill="#d8452c"/><rect x="5" y="7.800" width="2" height="2.200" fill="#fff" opacity=".85"/></svg>
<div class="abs" style="left:0;top:650px;width:100px;height:1px;background:#e4e7ea"></div>
</div></div><!--/TBL-->
  <div id="crumb">
    <svg class="abs" style="left:25px;top:9px" width="18" height="18" viewBox="0 0 18 18"><path d="M1 8.600L9 1.400L17 8.600" fill="none" stroke="#4a4f57" stroke-width="1.600" stroke-linejoin="round"/><path d="M3.500 7.200V16.200H14.500V7.200" fill="none" stroke="#4a4f57" stroke-width="1.600"/><path d="M7.600 16.200V11.600H10.400V16.200" fill="none" stroke="#4a4f57" stroke-width="1.400"/></svg>
    <svg class="abs" style="left:54px;top:14px" width="6" height="9" viewBox="0 0 6 9"><path d="M1 1L4.500 4.500L1 8" fill="none" stroke="#b0b4ba" stroke-width="1.300"/></svg>
    <div class="lbl" id="cr1" style="left:70px;top:6px">User Management</div>
    <svg class="abs" style="left:202px;top:14px" width="6" height="9" viewBox="0 0 6 9"><path d="M1 1L4.500 4.500L1 8" fill="none" stroke="#b0b4ba" stroke-width="1.300"/></svg>
    <div class="abs" style="left:1777px;top:0;width:24px;height:36px;background:linear-gradient(90deg,#f0f0f2,#ebebee)"></div><div class="lbl" id="cr2" style="left:218px;top:6px">User List</div>
  </div>
  <div id="hdr">
    <!-- coordinates relative to hdr: x-119, y-122 -->
    <svg class="abs" style="left:29px;top:20px" width="30" height="24" viewBox="0 0 30 24"><path d="M1 8.900L9 1 15.200 7.600 10 15.800z" fill="#1559ad" stroke="#1559ad" stroke-width=".8" stroke-linejoin="round"/><path d="M4.300 8.900L9 4.300 12.300 7.700 8.600 12.300z" fill="#2f7dd6" opacity=".75"/><path d="M10 15.600L21.600 3.900 28.500 10.600 16 22.400z" fill="#e6262e" stroke="#e6262e" stroke-width="1.200" stroke-linejoin="round"/><path d="M10 15.600L12.200 13.400 18.300 20.200 16 22.400z" fill="#c81a23" stroke="#c81a23" stroke-width="1" stroke-linejoin="round"/></svg>
    <svg class="abs" style="left:65px;top:25px" width="10" height="14" viewBox="0 0 10 14"><path d="M8 1L2 13" stroke="#c4c7cc" stroke-width="1.200"/></svg>
    <div class="t" id="bidv" style="left:81px;top:17px;font-size:29px;color:#0d6b63;letter-spacing:-1.700px;line-height:30px;-webkit-text-stroke:.85px #0d6b63">BIDV</div>
    <svg class="abs" style="left:142.500px;top:14.500px" width="24" height="24" viewBox="-12 -12 24 24"><defs><radialGradient id="fl" r=".6"><stop offset="0" stop-color="#f6d765"/><stop offset="1" stop-color="#e9b93a"/></radialGradient></defs><g fill="#edc248"><circle cx="0" cy="-6.400" r="4.700"/><circle cx="6.100" cy="-2" r="4.700"/><circle cx="3.800" cy="5.200" r="4.700"/><circle cx="-3.800" cy="5.200" r="4.700"/><circle cx="-6.100" cy="-2" r="4.700"/></g><circle cx="0" cy="0" r="3.700" fill="#fffdf3"/><g fill="#fff" opacity=".55"><circle cx="0" cy="-3.300" r="1.300"/><circle cx="3.100" cy="-1" r="1.300"/><circle cx="1.900" cy="2.700" r="1.300"/><circle cx="-1.900" cy="2.700" r="1.300"/><circle cx="-3.100" cy="-1" r="1.300"/></g></svg>
    <!-- select pill -->
    <div class="abs" style="left:185px;top:13px;width:299px;height:39px;border-radius:12px;background:#f1f4f7"></div>
    <div class="abs" style="left:198px;top:21px;width:23px;height:23px;border-radius:12px;background:linear-gradient(180deg,#0c6e6a,#12908a)"></div>
    <svg class="abs" style="left:203px;top:26px" width="13" height="12" viewBox="0 0 13 12"><path d="M4 2.500V0.800H9V2.500" fill="none" stroke="#fff" stroke-width="1.200"/><rect x="0.500" y="2.500" width="12" height="9" rx="1" fill="#fff"/><rect x="2" y="4" width="2.500" height="2.500" fill="#0f7f78"/><rect x="8.500" y="4" width="2.500" height="2.500" fill="#0f7f78"/><rect x="5.500" y="4" width="2" height="3" fill="#0f7f78"/></svg>
    <div class="t" id="hoiso" style="left:231px;top:21px;font-size:14px;line-height:22px;color:#2b3036">Hội sở</div>
    <svg class="abs" style="left:462px;top:27px" width="12" height="9" viewBox="0 0 12 9"><path d="M1 1L6 7.500L11 1" fill="none" stroke="#b3b8be" stroke-width="1.200"/></svg>
    <!-- chat button -->
    <div class="abs" style="left:1008px;top:12px;width:178px;height:40px;border:1px solid #909499;border-radius:11px;background:#fff"></div>
    <svg class="abs" style="left:1024px;top:21px" width="21" height="22" viewBox="0 0 21 22"><path d="M4.500 1.300C1.700 4.500.300 9 .800 12.500 1.500 17.200 5 20.900 10.500 20.900 13.700 20.900 16.700 19.900 19 17.700 16.500 18.700 13.600 19.200 10.800 18.700 6.300 18 3.200 15.400 2.600 12 2.100 9 2.900 5 4.500 1.300z" fill="#1a1a1a"/><text x="4.800" y="13" font-family="Liberation Sans,sans-serif" font-size="6.400" font-weight="bold" fill="#2a2a2a" textLength="14" lengthAdjust="spacingAndGlyphs">Zalo</text></svg>
    <div class="t sb" id="chat" style="left:1054px;top:21px;letter-spacing:.49px;font-size:14px;line-height:22px;font-weight:bold;color:#26282b">Chat with VNPAY</div>
    <div class="abs" style="left:1197px;top:23px;width:1px;height:17px;background:#a9acb1"></div>
    <svg class="abs" style="left:1228px;top:20px" width="24" height="24" viewBox="0 0 24 24"><path fill="#1f8fd0" d="M6.620 10.790c1.440 2.830 3.760 5.140 6.590 6.590l2.200-2.200c.27-.27.670-.36 1.020-.24 1.120.37 2.330.57 3.570.57.550 0 1 .45 1 1V20c0 .55-.45 1-1 1-9.390 0-17-7.610-17-17 0-.55.450-1 1-1h3.500c.55 0 1 .45 1 1 0 1.250.2 2.450.57 3.570.11.350.03.740-.25 1.020l-2.200 2.200z"/></svg>
    <div class="t sb" id="phone" style="left:1260px;top:21px;font-size:14.5px;letter-spacing:.73px;line-height:22px;font-weight:bold;color:#2a93c8">0247.309.1291</div>
    <svg class="abs" style="left:1398px;top:25px" width="14" height="14" viewBox="0 0 14 14"><path d="M1.500 9V6.500a5.500 5.500 0 0 1 11 0V9" fill="none" stroke="#1b1b1b" stroke-width="1.800"/><rect x="0.500" y="7.500" width="3.600" height="5.800" rx="1.200" fill="#1b1b1b"/><rect x="9.900" y="7.500" width="3.600" height="5.800" rx="1.200" fill="#1b1b1b"/></svg>
    <div class="t sb" id="ext" style="left:1417px;top:21px;letter-spacing:.55px;font-size:12px;line-height:22px;font-weight:bold;color:#1d1f22;text-decoration:underline">Extension Number</div>
    <div class="abs" style="left:1540px;top:23px;width:1px;height:17px;background:#a9acb1"></div>
    <!-- flag -->
    <svg class="abs" style="left:1558px;top:21px" width="21" height="21" viewBox="-10.500 -10.500 21 21"><defs><clipPath id="fc"><circle r="10.200"/></clipPath></defs><g clip-path="url(#fc)"><rect x="-11" y="-11" width="22" height="22" fill="#f2f2f4"/><g stroke="#3d4a8f" stroke-width="5.500"><path d="M-11-11L11 11M11-11L-11 11" stroke-dasharray="1.300 1.300"/></g><path d="M-11-11L11 11M11-11L-11 11" stroke="#fff" stroke-width="3.200"/><path d="M-11-11L11 11M11-11L-11 11" stroke="#d8232f" stroke-width="1.200"/><path d="M0-11V11M-11 0H11" stroke="#fff" stroke-width="7"/><path d="M0-11V11M-11 0H11" stroke="#e01e35" stroke-width="4.200"/></g></svg>
    <div class="t" id="eng" style="left:1587px;top:21px;font-size:15px;line-height:22px;color:#4a4f57;-webkit-text-stroke:.25px">English</div>
    <svg class="abs" style="left:1677px;top:29px" width="10" height="6" viewBox="0 0 10 6"><path d="M0.800 0.500H9.200L5 5.200z" fill="#111"/></svg>
    <div class="abs" style="left:1709px;top:23px;width:1px;height:17px;background:#a9acb1"></div>
    <!-- avatar -->
    <div class="abs" style="left:1727px;top:0;width:50px;height:64px;background:#f7f7f8"></div><div class="abs" style="left:1777px;top:0;width:24px;height:64px;background:linear-gradient(90deg,#f0f0f2,#ebebee)"></div>
    <svg class="abs" style="left:1727px;top:12px;overflow:visible" width="40" height="40" viewBox="0 0 40 40"><defs><linearGradient id="av" x1=".3" y1="0" x2=".5" y2="1"><stop offset="0" stop-color="#0a4db0"/><stop offset=".45" stop-color="#0b6cc4"/><stop offset="1" stop-color="#14b4ea"/></linearGradient></defs><circle cx="20" cy="20" r="20" fill="url(#av)"/><circle cx="20" cy="18" r="8.300" fill="#fff"/><ellipse cx="20" cy="43" rx="17.500" ry="15" fill="#f8f8f9"/></svg>
  </div>


  <!-- scrollbar -->
  <div class="abs" style="left:1870px;top:102px;width:50px;height:808px;background:linear-gradient(90deg,#f1f2f5 0,#ebecf0 40%,#e3e4e8 80%,#d8d9dd 100%)"></div>
  <div class="abs" style="left:1906px;top:275px;width:8px;height:436px;border-radius:4px;background:#9aabb0;box-shadow:0 0 0 1px rgba(225,235,240,.7)"></div>
  <!-- popover -->
  <div class="abs" id="pop" style="left:1666px;top:68px;width:230px;height:120px;border-radius:10px;background:#fff;box-shadow:0 8px 24px rgba(0,0,0,.10),0 2px 6px rgba(0,0,0,.05)">
    <svg class="abs" style="left:20px;top:20px" width="17" height="22" viewBox="0 0 17 22"><circle cx="8.500" cy="6.300" r="6.200" fill="#4e5966"/><path d="M0.300 21.800c0-5 2.800-8 5.800-8.300l2.400 3 2.400-3c3 .300 5.800 3.300 5.800 8.300z" fill="#4e5966"/><path d="M7.700 14.500h1.600v7.300H7.700z" fill="#fff"/></svg>
    <div class="lbl" id="pa" style="left:48px;top:21px;letter-spacing:.45px">Account Information</div>
    <svg class="abs" style="left:20px;top:78px" width="19" height="20" viewBox="0 0 19 20"><path d="M15.500 5V1H1V19H15.500V15" fill="none" stroke="#4a4f57" stroke-width="1.700"/><path d="M7 10H16" stroke="#4a4f57" stroke-width="1.700"/><path d="M14 6.300L18.600 10L14 13.700z" fill="#4a4f57"/></svg>
    <div class="lbl" id="pl" style="left:48px;top:77px;letter-spacing:.17px">Log Out</div>
  </div>
  <div id="side">
    <div class="sblk" style="top:0;height:510px;border-radius:0 0 10px 0"></div>
    <div class="sblk" style="top:598px;height:312px;border-radius:0 10px 0 0"></div>
    <div class="abs" style="left:0;top:505px;width:12px;height:98px;background:#0b0c0e"></div>
    <!-- active item -->
    <div class="abs" style="left:5px;top:510px;width:110px;height:88px;border-radius:8px 0 0 8px;background:radial-gradient(ellipse 75% 95% at 0% 55%,#1f3f6e 0,#232c38 60%,#27282c 100%);border:1px solid #3565a8;border-right:none;-webkit-mask-image:linear-gradient(90deg,#000 0,#000 100%)"></div>
    <div class="abs" style="left:60px;top:510px;width:59px;height:88px;background:linear-gradient(90deg,rgba(37,40,43,0),#27282c 80%)"></div>
    <!-- Dashboard -->
    <svg class="abs" style="left:46px;top:32px" width="23" height="22" viewBox="0 0 23 22"><path d="M1.500 0V20.500H22" fill="none" stroke="#5b6069" stroke-width="2.600"/><path d="M6 13.500L11 8.500L14 11.500L21 5" fill="none" stroke="#5b6069" stroke-width="2.800"/></svg>
    <div class="nav sb" style="top:56px">Dashboard</div>
    <!-- Sale portal -->
    <svg class="abs" style="left:47px;top:133px" width="20" height="20" viewBox="0 0 20 20"><path d="M6 4V1H14V4" fill="none" stroke="#6d737d" stroke-width="1.800"/><rect x="0" y="4" width="20" height="16" fill="#6d737d"/><rect x="2" y="6" width="3.500" height="5" fill="#0b0c0e"/><rect x="14.500" y="6" width="3.500" height="5" fill="#0b0c0e"/><rect x="7.500" y="6" width="5" height="4" fill="#0b0c0e"/><rect x="9" y="9" width="2" height="3" fill="#6d737d"/></svg>
    <div class="nav sb" style="top:155px">Sale Portal</div>
    <!-- Reports -->
    <svg class="abs" style="left:45px;top:231px" width="24" height="24" viewBox="0 0 24 24"><path d="M13.300 2.800A9.300 9.300 0 1 0 20.800 15.200" fill="none" stroke="#636973" stroke-width="4.400"/><path d="M16.800 4A9.300 9.300 0 0 1 21.200 10" fill="none" stroke="#636973" stroke-width="4.400"/><path d="M16.500 12.500l7.300-.300-3.300 5.800z" fill="#636973"/></svg>
    <div class="nav sb" style="top:259px">Reports</div>
    <!-- Unit -->
    <svg class="abs" style="left:46px;top:322px" width="22" height="22" viewBox="0 0 22 22"><g fill="none" stroke="#6d737d" stroke-width="2"><rect x="7" y="1" width="8" height="5.500"/><rect x="1" y="15" width="8" height="5.500"/><rect x="13" y="15" width="8" height="5.500"/><path d="M11 6.500V11M5 15V11H17V15"/></g></svg>
    <div class="nav sb" style="top:346px">Unit<br>Management</div>
    <!-- Role group -->
    <svg class="abs" style="left:47px;top:423px" width="20" height="20" viewBox="0 0 20 20"><circle cx="10" cy="10" r="10" fill="#5f656f"/><g fill="#0b0c0e"><circle cx="7" cy="6.500" r="2"/><circle cx="13.500" cy="6" r="1.700"/><path d="M2.500 13c0-2.500 2-4 4.500-4s3 1 3 2.500v8l-1 .300C5 19 2.500 16 2.500 13z" opacity=".85"/><path d="M11.500 10.500c0-1.500 1.500-2.500 3-2.500s3.500 1.500 3.500 3.500c-1 3.500-3.500 6.500-6.500 8z" opacity=".85"/></g><path d="M9.600 11V19.500" stroke="#5f656f" stroke-width="1.200"/><path d="M3 14.500H9.500" stroke="#5f656f" stroke-width="1.200"/></svg>
    <div class="nav sb" style="top:445px">Role Group<br>Management</div>
    <!-- User mgmt (active) -->
    <svg class="abs" style="left:46px;top:520px" width="23" height="25" viewBox="0 0 23 25"><circle cx="10" cy="7.500" r="7" fill="#fff"/><path d="M1 24.500c0-5 3.500-8.700 9.500-8.700V24.500z" fill="#fff"/><g transform="translate(17 20)" fill="#fff"><circle r="3.600"/><g><rect x="-1.200" y="-5.200" width="2.400" height="10.400" rx=".6"/><rect x="-1.200" y="-5.200" width="2.400" height="10.400" rx=".6" transform="rotate(60)"/><rect x="-1.200" y="-5.200" width="2.400" height="10.400" rx=".6" transform="rotate(120)"/></g></g><circle cx="17" cy="20" r="1.600" fill="#23282f"/></svg>
    <div class="nav sb" style="top:548px;color:#fff">User<br>Management</div>
    <!-- User guide -->
    <div class="abs" style="left:7px;top:803px;width:94px;height:96px;border-radius:7px;background:radial-gradient(ellipse 90% 70% at 0% 55%,#1d4479 0,#243142 55%,#272a2e 100%)"></div>
    <svg class="abs" style="left:43px;top:826px" width="22" height="24" viewBox="0 0 22 24"><defs><linearGradient id="bk" x1="0" y1="0" x2="0" y2="1"><stop offset="0" stop-color="#c9dcf0"/><stop offset="1" stop-color="#f4f8fc"/></linearGradient></defs><path d="M1 3.500Q1 1 3.500 1H21V19H4.500Q3 19 3 20.500T4.500 22H21V24H4Q1 24 1 21Z" fill="url(#bk)"/><rect x="6.500" y="6.500" width="9" height="2" rx="1" fill="#1b2a40"/></svg>
    <div class="nav sb" style="top:856px;left:-3px;color:#b5c3da">User Guide</div>
  </div>
</div>
</body>
</html>
